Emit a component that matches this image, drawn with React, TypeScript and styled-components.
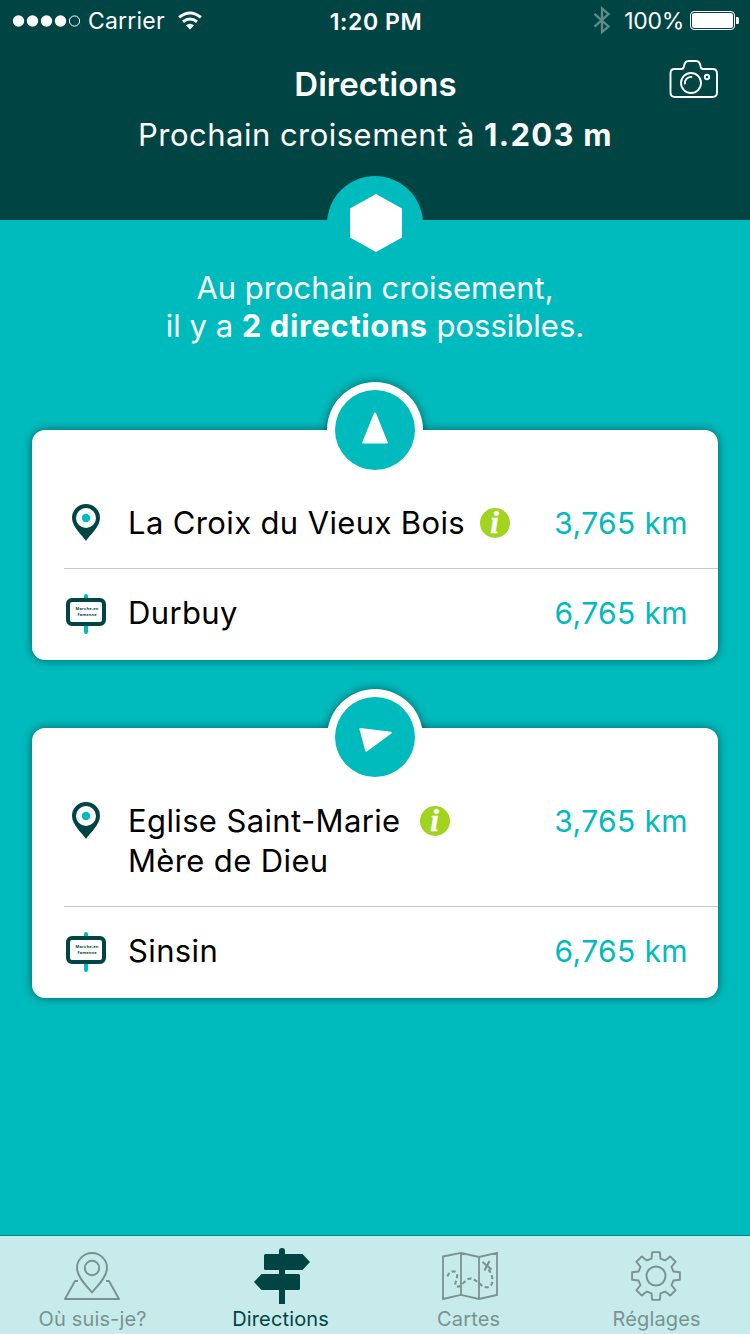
import React from 'react';
import styled, { createGlobalStyle } from 'styled-components';

const dark = '#004444';
const teal = '#00bbbd';
const muted = '#789392';

const GlobalStyle = createGlobalStyle`
  * { box-sizing: border-box; }
  body {
    margin: 0;
    background: ${teal};
    font-family: Inter, 'Liberation Sans', sans-serif;
  }
  svg { display: block; flex: none; overflow: visible; }
`;

const Screen = styled.div`
  width: 750px;
  height: 1334px;
  display: flex;
  flex-direction: column;
  background: ${teal};
  overflow: hidden;
`;

const Header = styled.header`
  height: 220px;
  flex: none;
  background: ${dark};
  color: #fff;
  position: relative;
`;

const StatusBar = styled.div`
  height: 40px;
  display: grid;
  grid-template-columns: 1fr auto 1fr;
  align-items: center;
  padding: 2px 10px 0 12px;
  font-size: 23px;
  line-height: 38px;
`;

const StatusGroup = styled.div<{ $end?: boolean }>`
  display: flex;
  align-items: center;
  height: 38px;
  justify-content: ${(p) => (p.$end ? 'flex-end' : 'flex-start')};
`;

const Carrier = styled.span`
  margin: 0 12px 0 7px;
  letter-spacing: 0.2px;
`;

const Time = styled.span`
  height: 38px;
  line-height: 40px;
  font-weight: 600;
  letter-spacing: 0.6px;
`;

const Percent = styled.span`
  margin: 0 6px 0 13px;
  letter-spacing: -0.3px;
`;

const Title = styled.h1`
  margin: 24px 0 0;
  font-size: 33px;
  line-height: 40px;
  font-weight: 600;
  letter-spacing: 0;
  padding-left: 1px;
  text-align: center;
`;

const Subtitle = styled.p`
  margin: 11px 0 0;
  font-size: 31px;
  line-height: 40px;
  letter-spacing: 0.48px;
  padding-left: 1px;
  text-align: center;
  b { font-weight: 700; letter-spacing: 1.3px; }
`;

const CameraButton = styled.div`
  position: absolute;
  top: 59px;
  right: 31px;
`;

const CrossingBadge = styled.div`
  position: absolute;
  top: 176px;
  left: 327px;
  width: 96px;
  height: 96px;
  border-radius: 50%;
  background: ${teal};
  padding: 18px 0 0 23px;
`;

const Content = styled.main`
  flex: 1;
  padding: 49px 32px 0;
`;

const Intro = styled.p`
  margin: 0 0 85px;
  color: #fff;
  font-size: 31px;
  line-height: 38px;
  height: 76px;
  text-align: center;
  b { font-weight: 700; letter-spacing: 0.6px; }
`;

const Card = styled.section<{ $height: number }>`
  position: relative;
  height: ${(p) => p.$height}px;
  margin-bottom: 68px;
  padding: 48px 0 0 32px;
  border-radius: 13px;
  background: #fff;
  box-shadow: 0 0 10px rgba(0, 50, 50, 0.65);
`;

const Ring = styled.div<{ $top: number }>`
  position: absolute;
  top: ${(p) => p.$top}px;
  left: 295px;
  width: 96px;
  height: 96px;
  border-radius: 50%;
  background: #fff;
  padding: 8px;
  box-shadow: 0 0 10px rgba(0, 50, 50, 0.65);
  clip-path: inset(-20px -20px ${(p) => 96 + p.$top}px -20px);
`;

const Bearing = styled.div<{ $top: number }>`
  position: absolute;
  top: ${(p) => p.$top + 8}px;
  left: 303px;
  width: 80px;
  height: 80px;
  border-radius: 50%;
  background: ${teal};
`;

const Row = styled.div<{ $height: number; $line?: boolean }>`
  height: ${(p) => p.$height}px;
  display: flex;
  padding: ${(p) => (p.$line ? 25 : 24)}px 30px 0 2px;
  border-bottom: ${(p) => (p.$line ? '1px solid #c8c8ca' : '0')};
`;

const Place = styled.div`
  margin-left: 22px;
  flex: 1;
  display: flex;
  font-size: 31px;
  line-height: 40px;
  letter-spacing: 0.37px;
  color: #000;
`;

const Distance = styled.div`
  font-size: 30px;
  line-height: 41px;
  letter-spacing: 0.38px;
  color: ${teal};
`;

const InfoDot = styled.span<{ $gap: number }>`
  margin: 5px 0 0 ${(p) => p.$gap}px;
  width: 30px;
  height: 30px;
`;

const TabBar = styled.nav`
  height: 99px;
  flex: none;
  display: grid;
  grid-template-columns: repeat(4, 188px);
  margin-left: -2px;
  width: 752px;
  border-top: 1px solid #0a8586;
  background: #c7ebea;
`;

const Tab = styled.div<{ $active?: boolean }>`
  display: flex;
  flex-direction: column;
  align-items: center;
  padding-top: 10px;
  color: ${(p) => (p.$active ? dark : muted)};
`;

const TabLabel = styled.span`
  margin-top: 3px;
  padding-left: 1.2px;
  font-size: 20px;
  line-height: 24px;
  letter-spacing: 0.15px;
`;

const Signal = () => (
  <svg width="69" height="14" viewBox="0 0 69 14">
    {[6.5, 20.5, 34.5, 48.5].map((x) => (
      <circle key={x} cx={x} cy="7" r="5.7" fill="#fff" />
    ))}
    <circle cx="62.5" cy="7" r="5.1" fill="none" stroke="#fff" />
  </svg>
);

const Wifi = () => (
  <svg width="26" height="20" viewBox="0 0 26 20">
    <g fill="none" stroke="#fff" strokeWidth="3">
      <path d="M2.1 6.3Q13 -2.4 23.9 6.3" />
      <path d="M6 10.7Q13 5.4 20 10.7" />
    </g>
    <path d="M9 14.3Q13 11.2 17 14.3L13 18.6Z" fill="#fff" />
  </svg>
);

const Bluetooth = () => (
  <svg width="18" height="30" viewBox="0 0.7 18 30">
    <path d="M1.5 8.6L15.5 21.2L9 26.8V3.2L15.5 8.8L1.5 21.4" fill="none" stroke="#608b8a" strokeWidth="2.3" />
  </svg>
);

const Battery = () => (
  <svg width="50" height="20" viewBox="0 0 50 20">
    <rect x="0.5" y="0.5" width="44" height="18" rx="3.5" fill="none" stroke="#fff" />
    <rect x="2" y="2" width="41" height="15" rx="2" fill="#fff" />
    <path d="M46 6h1.5a1.5 1.5 0 0 1 1.5 1.5v4a1.5 1.5 0 0 1-1.5 1.5H46Z" fill="#fff" />
  </svg>
);

const Camera = () => (
  <svg width="50" height="40" viewBox="669 59 50 40" fill="none" stroke="#fff" strokeWidth="1.9">
    <path d="M674.5 69H681.5C683.2 69 683.6 68 683.9 66.5C684.6 62.5 686 61 688.5 61H696C698.5 61 700 62.5 700.6 66.5C700.9 68 701.3 69 703 69H712.5Q717 69 717 73.5V92.5Q717 97 712.5 97H675Q670.5 97 670.5 92.5V73.5Q670.5 69 674.5 69Z" />
    <circle cx="691" cy="83" r="10" />
    <path d="M684.9 83.5A6.2 6.2 0 0 1 691.5 76.9" strokeLinecap="round" />
    <circle cx="707" cy="77" r="2.2" />
  </svg>
);

const Pin = () => (
  <svg width="40" height="40" viewBox="66 503 40 40">
    <path d="M86 541C82.5 535.5 72 527 72 518A14 14 0 0 1 100 518C100 527 89.5 535.5 86 541Z" fill={dark} />
    <circle cx="86" cy="518" r="10" fill="#fff" />
    <circle cx="86" cy="518" r="4.2" fill={teal} />
  </svg>
);

const Sign = () => (
  <svg width="40" height="40" viewBox="0 -1 40 40">
    <rect x="18" y="0" width="4" height="40" rx="2" fill={teal} />
    <rect x="2" y="6" width="36" height="24" rx="4" fill="#fff" stroke={dark} strokeWidth="4" />
    <g fill={dark} fontFamily="'Open Sans', sans-serif" fontWeight="700" fontSize="4" textAnchor="middle">
      <text x="21" y="16.2" textLength="23">Marche-en</text>
      <text x="21" y="22.2" textLength="19">Famenne</text>
    </g>
  </svg>
);

const Info = ({ gap }: { gap: number }) => (
  <InfoDot $gap={gap}>
    <svg width="30" height="30" viewBox="0 0 30 30">
      <circle cx="15" cy="15" r="15" fill="#a2d41f" />
      <text x="14.5" y="25.3" textAnchor="middle" fill="#fff" stroke="#fff" strokeWidth="0.5" fontFamily="'Liberation Serif', serif" fontSize="31" fontWeight="700" fontStyle="italic" letterSpacing="0">i</text>
    </svg>
  </InfoDot>
);

const WhereIcon = () => (
  <svg width="60" height="58" viewBox="62 1246 60 58" fill="none" stroke="currentColor" strokeWidth="1.9" strokeLinejoin="round">
    <path d="M92 1292.5C87 1286.5 77 1277 77 1268A15 15 0 0 1 107 1268C107 1277 97 1286.5 92 1292.5Z" />
    <circle cx="92" cy="1268" r="7.2" />
    <path d="M78 1281H75L65 1299H119L109 1281H106" />
  </svg>
);

const DirectionsIcon = () => (
  <svg width="60" height="58" viewBox="250 1246 60 58" fill="currentColor">
    <path d="M279 1304V1251a3 3 0 0 1 6 0V1304Z" />
    <path d="M265.5 1254H302.5L310 1262L302.5 1270H265.5Q264 1270 264 1268.5V1255.5Q264 1254 265.5 1254Z" />
    <path d="M298.5 1274H261.5L254 1282L261.5 1290H298.5Q300 1290 300 1288.5V1275.5Q300 1274 298.5 1274Z" />
  </svg>
);

const MapIcon = () => (
  <svg width="60" height="58" viewBox="438 1246 60 58" fill="none" stroke="currentColor" strokeWidth="1.8">
    <path d="M443 1256.5L461 1252.8L479 1257L497 1252.8V1295L479 1299L461 1294.8L443 1299ZM461 1252.8V1294.8M479 1257V1299" />
    <path d="M447.5 1276.5C449 1271 455.5 1269.5 457 1274C458 1279 453 1285 456.5 1286.5C462.5 1287.5 464 1279 470.5 1278.5C476 1279 479 1284.5 484.5 1287C490 1288.5 493 1284 492.5 1279.5C492 1275 490.5 1272 488.5 1269.5" strokeWidth="2.1" strokeDasharray="4 2.6" />
    <path d="M482.5 1262L491.5 1269.5M489.5 1261L484.5 1270.5" strokeWidth="2.1" />
  </svg>
);

const gearPath = (() => {
  const teeth: string[] = [];
  const point = (deg: number, r: number) => {
    const a = (deg * Math.PI) / 180;
    return `${(28 + r * Math.sin(a)).toFixed(2)} ${(28 - r * Math.cos(a)).toFixed(2)}`;
  };
  for (let i = 0; i < 8; i++) {
    const c = i * 45;
    teeth.push(point(c - 14.5, 18), point(c - 9, 24.2), point(c + 9, 24.2), point(c + 14.5, 18));
  }
  return `M${teeth.join('L')}Z`;
})();

const GearIcon = () => (
  <svg width="56" height="58" viewBox="0 -2 56 58" fill="none" stroke="currentColor" strokeWidth="1.9" strokeLinejoin="round">
    <path d={gearPath} />
    <circle cx="28" cy="28" r="9.5" />
  </svg>
);

const Heading = ({ top, points }: { top: number; points: string }) => (
  <>
    <Ring $top={top} />
    <Bearing $top={top}>
      <svg width="80" height="80" viewBox="-40 -40 80 80">
        <polygon points={points} fill="#fff" stroke="#fff" strokeWidth="2" strokeLinejoin="round" />
      </svg>
    </Bearing>
  </>
);

export default function App() {
  return (
    <Screen>
      <GlobalStyle />
      <Header>
        <StatusBar>
          <StatusGroup>
            <Signal />
            <Carrier>Carrier</Carrier>
            <Wifi />
          </StatusGroup>
          <Time>1:20 PM</Time>
          <StatusGroup $end>
            <Bluetooth />
            <Percent>100%</Percent>
            <Battery />
          </StatusGroup>
        </StatusBar>
        <Title>Directions</Title>
        <Subtitle>Prochain croisement à <b>1.203 m</b></Subtitle>
        <CameraButton><Camera /></CameraButton>
        <CrossingBadge>
          <svg width="52" height="58" viewBox="0 0 52 58">
            <polygon points="26,0 52,14.5 52,43.5 26,58 0,43.5 0,14.5" fill="#fff" />
          </svg>
        </CrossingBadge>
      </Header>
      <Content>
        <Intro>
          Au prochain croisement,<br />
          il y a <b>2 directions</b> possibles.
        </Intro>
        <Card $height={230}>
          <Heading top={-48} points="0,-16.5 -11.8,12.6 11.8,12.6" />
          <Row $height={91} $line>
            <Pin />
            <Place>La Croix du Vieux Bois<Info gap={15} /></Place>
            <Distance>3,765 km</Distance>
          </Row>
          <Row $height={91}>
            <Sign />
            <Place>Durbuy</Place>
            <Distance>6,765 km</Distance>
          </Row>
        </Card>
        <Card $height={270}>
          <Heading top={-39} points="-14.6,-8 15.7,-4.2 -8.7,13.7" />
          <Row $height={131} $line>
            <Pin />
            <Place><span>Eglise Saint-Marie<br />Mère de Dieu</span><Info gap={19.4} /></Place>
            <Distance>3,765 km</Distance>
          </Row>
          <Row $height={91}>
            <Sign />
            <Place>Sinsin</Place>
            <Distance>6,765 km</Distance>
          </Row>
        </Card>
      </Content>
      <TabBar>
        <Tab><WhereIcon /><TabLabel>Où suis-je?</TabLabel></Tab>
        <Tab $active><DirectionsIcon /><TabLabel>Directions</TabLabel></Tab>
        <Tab><MapIcon /><TabLabel>Cartes</TabLabel></Tab>
        <Tab><GearIcon /><TabLabel>Réglages</TabLabel></Tab>
      </TabBar>
    </Screen>
  );
}
